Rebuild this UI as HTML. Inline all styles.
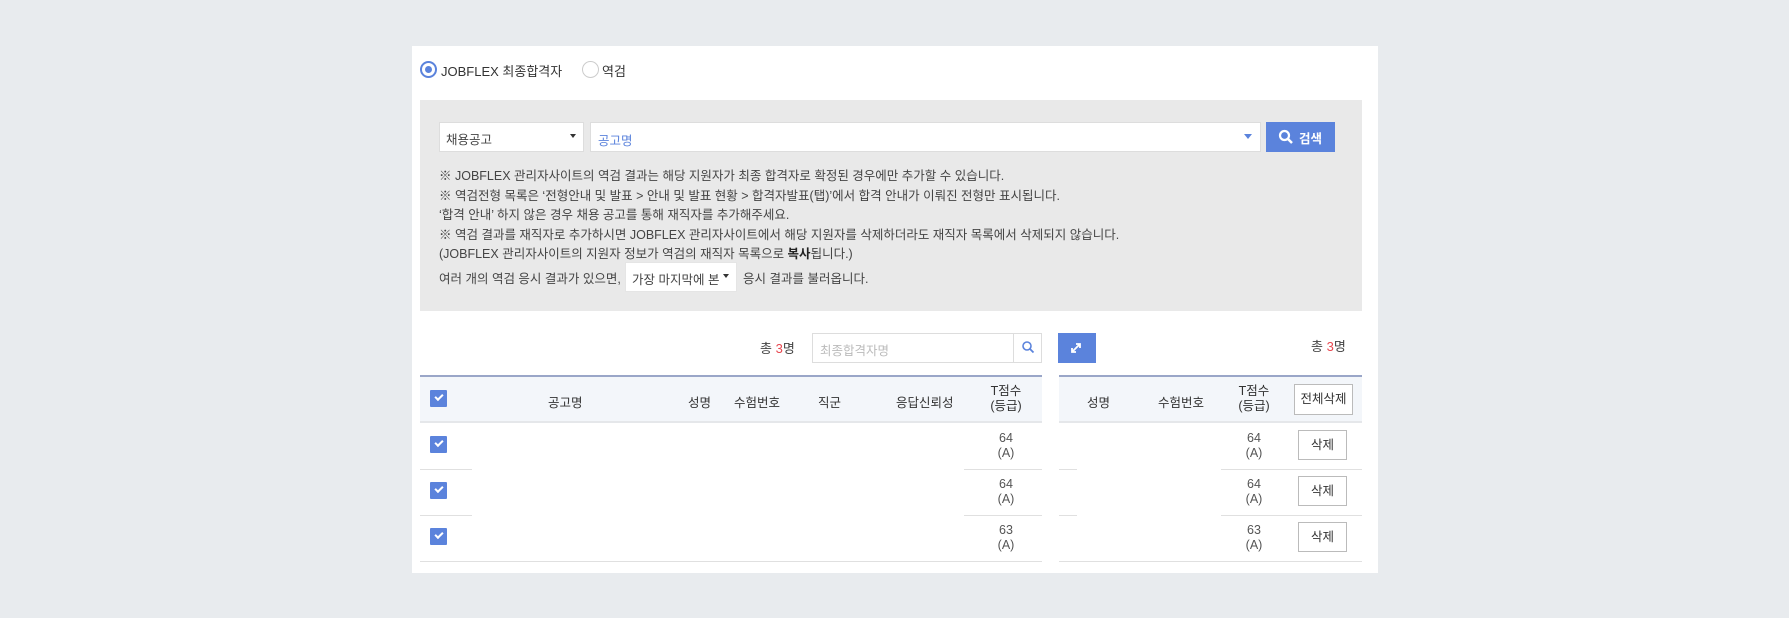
<!DOCTYPE html>
<html><head><meta charset="utf-8"><style>
*{box-sizing:border-box;margin:0;padding:0}
body{width:1789px;height:618px;background:#e8ebee;font-family:"Liberation Sans","Noto Sans CJK KR",sans-serif;color:#333;font-size:13px;position:relative;overflow:hidden}
.a{position:absolute}
.panel{left:412px;top:46px;width:966px;height:527px;background:#fff}
.gray{left:420px;top:100px;width:942px;height:211px;background:#e9e9e9}
.box{background:#fff;border:1px solid #ddd}
.t{white-space:nowrap;color:#444;font-size:12.5px}
.chk{width:17px;height:17px;background:#5b83dc;border-radius:1px}
.chk:after{content:"";position:absolute;left:5px;top:4px;width:6px;height:3px;border-left:2px solid #fff;border-bottom:2px solid #fff;transform:rotate(-45deg)}
.hd{background:#f3f6fa;border-top:2px solid #9aa6c8;border-bottom:2px solid #e5e7ea}
.line{height:1px;background:#e0e0e0}
.btn{background:#fff;border:1px solid #bbb;text-align:center;font-size:12.5px;color:#333}
.c{text-align:center;font-size:12.5px;line-height:15px;color:#555}
</style></head><body>
<div class="a panel"></div>
<div class="a" style="left:420px;top:61px;width:17px;height:17px;border:2px solid #5b83dc;border-radius:50%"></div>
<div class="a" style="left:425px;top:66px;width:7px;height:7px;background:#5b83dc;border-radius:50%"></div>
<div class="a t" style="left:441px;top:61px;font-size:13px;color:#333">JOBFLEX 최종합격자</div>
<div class="a" style="left:582px;top:61px;width:17px;height:17px;border:1px solid #ccc;border-radius:50%"></div>
<div class="a t" style="left:602px;top:61px;font-size:13px;color:#333">역검</div>

<div class="a gray"></div>
<div class="a box" style="left:439px;top:122px;width:145px;height:30px"></div>
<div class="a t" style="left:446px;top:129px">채용공고</div>
<div class="a" style="left:570px;top:134px;border:3.5px solid transparent;border-top:4px solid #333"></div>
<div class="a box" style="left:590px;top:122px;width:671px;height:30px"></div>
<div class="a t" style="left:598px;top:130px;color:#5b83dc">공고명</div>
<div class="a" style="left:1244px;top:134px;border:4px solid transparent;border-top:5px solid #5b83dc"></div>
<div class="a" style="left:1266px;top:122px;width:69px;height:30px;background:#5b83dc"></div>
<svg class="a" style="left:1278px;top:129px" width="16" height="16" viewBox="0 0 16 16"><circle cx="6.5" cy="6.5" r="4.5" fill="none" stroke="#fff" stroke-width="2.2"/><path d="M10 10l4 4" stroke="#fff" stroke-width="2.5"/></svg>
<div class="a t" style="left:1299px;top:128px;color:#fff;font-weight:bold">검색</div>

<div class="a t" style="left:439px;top:165px">※ JOBFLEX 관리자사이트의 역검 결과는 해당 지원자가 최종 합격자로 확정된 경우에만 추가할 수 있습니다.</div>
<div class="a t" style="left:439px;top:185px">※ 역검전형 목록은 ‘전형안내 및 발표 &gt; 안내 및 발표 현황 &gt; 합격자발표(탭)’에서 합격 안내가 이뤄진 전형만 표시됩니다.</div>
<div class="a t" style="left:439px;top:204px">‘합격 안내’ 하지 않은 경우 채용 공고를 통해 재직자를 추가해주세요.</div>
<div class="a t" style="left:439px;top:224px">※ 역검 결과를 재직자로 추가하시면 JOBFLEX 관리자사이트에서 해당 지원자를 삭제하더라도 재직자 목록에서 삭제되지 않습니다.</div>
<div class="a t" style="left:439px;top:243px">(JOBFLEX 관리자사이트의 지원자 정보가 역검의 재직자 목록으로 <b style="color:#222">복사</b>됩니다.)</div>
<div class="a t" style="left:439px;top:268px">여러 개의 역검 응시 결과가 있으면,</div>
<div class="a box" style="left:625px;top:262px;width:112px;height:30px;border-color:#e5e5e5"></div>
<div class="a t" style="left:632px;top:269px">가장 마지막에 본</div>
<div class="a" style="left:723px;top:274px;border:3.5px solid transparent;border-top:4px solid #333"></div>
<div class="a t" style="left:743px;top:268px">응시 결과를 불러옵니다.</div>

<div class="a t" style="left:760px;top:338px;font-size:13px">총 <span style="color:#e8474f">3</span>명</div>
<div class="a box" style="left:812px;top:333px;width:230px;height:30px"></div>
<div class="a t" style="left:820px;top:340px;color:#bbb">최종합격자명</div>
<div class="a" style="left:1013px;top:333px;width:1px;height:30px;background:#ddd"></div>
<svg class="a" style="left:1021px;top:340px" width="14" height="14" viewBox="0 0 14 14"><circle cx="6" cy="6" r="4" fill="none" stroke="#5b83dc" stroke-width="1.6"/><path d="M9 9l3.5 3.5" stroke="#5b83dc" stroke-width="1.8"/></svg>
<div class="a" style="left:1058px;top:333px;width:38px;height:30px;background:#5b83dc"></div>
<svg class="a" style="left:1069px;top:341px" width="14" height="14" viewBox="0 0 14 14"><path d="M3 11L11 3M7 3h4v4M3 7v4h4" stroke="#fff" stroke-width="1.8" fill="none"/></svg>
<div class="a t" style="left:1311px;top:336px;font-size:13px">총 <span style="color:#e8474f">3</span>명</div>

<div class="a hd" style="left:420px;top:375px;width:622px;height:48px"></div>
<div class="a hd" style="left:1059px;top:375px;width:303px;height:48px"></div>
<div class="a chk" style="left:430px;top:390px"></div>
<div class="a t" style="left:548px;top:392px;color:#333">공고명</div>
<div class="a t" style="left:688px;top:392px;color:#333">성명</div>
<div class="a t" style="left:734px;top:392px;color:#333">수험번호</div>
<div class="a t" style="left:818px;top:392px;color:#333">직군</div>
<div class="a t" style="left:896px;top:392px;color:#333">응답신뢰성</div>
<div class="a c" style="left:986px;top:384px;width:40px;color:#333">T점수<br>(등급)</div>
<div class="a t" style="left:1087px;top:392px;color:#333">성명</div>
<div class="a t" style="left:1158px;top:392px;color:#333">수험번호</div>
<div class="a c" style="left:1234px;top:384px;width:40px;color:#333">T점수<br>(등급)</div>
<div class="a btn" style="left:1294px;top:384px;width:59px;height:31px;line-height:29px">전체삭제</div>

<div class="a chk" style="left:430px;top:436px"></div>
<div class="a chk" style="left:430px;top:482px"></div>
<div class="a chk" style="left:430px;top:528px"></div>
<div class="a c" style="left:986px;top:431px;width:40px">64<br>(A)</div>
<div class="a c" style="left:986px;top:477px;width:40px">64<br>(A)</div>
<div class="a c" style="left:986px;top:523px;width:40px">63<br>(A)</div>
<div class="a c" style="left:1234px;top:431px;width:40px">64<br>(A)</div>
<div class="a c" style="left:1234px;top:477px;width:40px">64<br>(A)</div>
<div class="a c" style="left:1234px;top:523px;width:40px">63<br>(A)</div>
<div class="a btn" style="left:1298px;top:430px;width:49px;height:30px;line-height:28px">삭제</div>
<div class="a btn" style="left:1298px;top:476px;width:49px;height:30px;line-height:28px">삭제</div>
<div class="a btn" style="left:1298px;top:522px;width:49px;height:30px;line-height:28px">삭제</div>

<div class="a line" style="left:420px;top:469px;width:52px"></div>
<div class="a line" style="left:964px;top:469px;width:78px"></div>
<div class="a line" style="left:420px;top:515px;width:52px"></div>
<div class="a line" style="left:964px;top:515px;width:78px"></div>
<div class="a line" style="left:420px;top:561px;width:622px"></div>
<div class="a line" style="left:1059px;top:469px;width:18px"></div>
<div class="a line" style="left:1221px;top:469px;width:141px"></div>
<div class="a line" style="left:1059px;top:515px;width:18px"></div>
<div class="a line" style="left:1221px;top:515px;width:141px"></div>
<div class="a line" style="left:1059px;top:561px;width:303px"></div>
</body></html>
